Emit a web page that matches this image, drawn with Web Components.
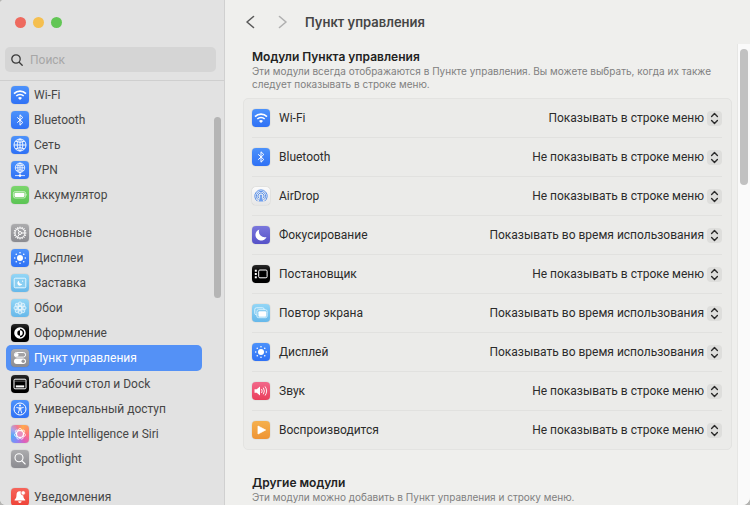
<!DOCTYPE html>
<html lang="ru">
<head>
<meta charset="utf-8">
<meta name="viewport" content="width=device-width, initial-scale=1">
<title>Пункт управления</title>
<style>
    html, body {
        height: 100%;
        margin: 0;
        background: #b4b4b2;
    }
    body {
        --text-font: Roboto, "Liberation Sans", sans-serif;
        --heading-font: Inter, "Liberation Sans", sans-serif;
        font-family: var(--text-font);
        font-size: 12px;
        line-height: 16px;
        color: #2b2b2b;
    }
</style>
</head>
<body>

<settings-window>
    <settings-sidebar slot="sidebar">
        <nav-group>
            <nav-item icon="wifi">Wi-Fi</nav-item>
            <nav-item icon="bluetooth">Bluetooth</nav-item>
            <nav-item icon="network">Сеть</nav-item>
            <nav-item icon="vpn">VPN</nav-item>
            <nav-item icon="battery">Аккумулятор</nav-item>
        </nav-group>
        <nav-group>
            <nav-item icon="general">Основные</nav-item>
            <nav-item icon="display">Дисплеи</nav-item>
            <nav-item icon="saver">Заставка</nav-item>
            <nav-item icon="wallpaper">Обои</nav-item>
            <nav-item icon="appearance">Оформление</nav-item>
            <nav-item icon="control" selected>Пункт управления</nav-item>
            <nav-item icon="dock">Рабочий стол и Dock</nav-item>
            <nav-item icon="access">Универсальный доступ</nav-item>
            <nav-item icon="siri">Apple Intelligence и Siri</nav-item>
            <nav-item icon="spotlight">Spotlight</nav-item>
        </nav-group>
        <nav-group>
            <nav-item icon="bell">Уведомления</nav-item>
        </nav-group>
    </settings-sidebar>

    <settings-pane slot="pane" heading="Пункт управления">
        <module-section heading="Модули Пункта управления">
            <span slot="note">Эти модули всегда отображаются в Пункте управления. Вы можете выбрать, когда их также следует показывать в строке меню.</span>
            <module-row icon="wifi" label="Wi-Fi" value="show"></module-row>
            <module-row icon="bluetooth" label="Bluetooth" value="hide"></module-row>
            <module-row icon="airdrop" label="AirDrop" value="hide"></module-row>
            <module-row icon="focus" label="Фокусирование" value="active"></module-row>
            <module-row icon="stage" label="Постановщик" value="hide"></module-row>
            <module-row icon="mirror" label="Повтор экрана" value="active"></module-row>
            <module-row icon="display" label="Дисплей" value="active"></module-row>
            <module-row icon="sound" label="Звук" value="hide"></module-row>
            <module-row icon="play" label="Воспроизводится" value="hide"></module-row>
        </module-section>
        <module-section heading="Другие модули">
            <span slot="note">Эти модули можно добавить в Пункт управления и строку меню.</span>
        </module-section>
    </settings-pane>
</settings-window>

<script>
// tile: background of the rounded square, art: what is drawn on it (18 x 18 box)
const sunRays = [0, 45, 90, 135, 180, 225, 270, 315]
    .map(a => `<circle cx="9" cy="3.7" r=".8" transform="rotate(${a} 9 9)"/>`).join('');
const petals = [0, 45, 90, 135, 180, 225, 270, 315]
    .map(a => `<ellipse cx="9" cy="5.6" rx="1.9" ry="2.7" transform="rotate(${a} 9 9)"/>`).join('');
const gearTeeth = Array.from({length: 16}, (_, i) =>
    `<path d="M9 2.6V4" transform="rotate(${i * 22.5} 9 9)"/>`).join('');

const blue = 'linear-gradient(#4c92fb, #2f71f5)';
const grey = 'linear-gradient(#acacae, #8b8b90)';
const sky = 'linear-gradient(#93d6f6, #66b8ea)';
const black = 'linear-gradient(#2a2a2a, #000 40%)';

const icons = {
    wifi: { tile: blue, art: `
        <g fill="none" stroke="#fff" stroke-width="1.6">
            <path d="M3 7.6a8.6 8.6 0 0 1 12 0"/>
            <path d="M5.3 10a5.3 5.3 0 0 1 7.4 0"/>
        </g>
        <path d="M9 14l-2-2.1a2.9 2.9 0 0 1 4 0z" fill="#fff"/>` },
    bluetooth: { tile: blue, art: `
        <path d="M6.2 6.3l5.6 5.2L9 14.2V3.8l2.8 2.7-5.6 5.2" fill="none" stroke="#fff" stroke-width="1"/>` },
    network: { tile: blue, art: `
        <g fill="none" stroke="#fff" stroke-width=".9">
            <circle cx="9" cy="9" r="6"/><ellipse cx="9" cy="9" rx="2.8" ry="6"/>
            <path d="M3 9h12M9 3v12M4.5 5.2q4.5 2.4 9 0M4.5 12.8q4.5-2.4 9 0"/>
        </g>` },
    vpn: { tile: blue, art: `
        <g fill="none" stroke="#fff" stroke-width=".8">
            <circle cx="9" cy="6.8" r="4.7"/><ellipse cx="9" cy="6.8" rx="2.2" ry="4.7"/>
            <path d="M4.3 6.8h9.4M9 2v11M5.4 4q3.6 1.8 7.2 0M5.4 9.6q3.6-1.8 7.2 0"/>
            <path d="M4 14.6h10"/>
        </g>
        <circle cx="9" cy="14.6" r="1.3" fill="#fff"/>` },
    battery: { tile: 'linear-gradient(#7bd66c, #5bc454)', art: `
        <rect x="2.4" y="5.6" width="12.2" height="6.4" rx="1.8" fill="none" stroke="#d9f5d4" stroke-width=".8"/>
        <rect x="3.5" y="6.7" width="10" height="4.2" rx="1" fill="#fff"/>
        <path d="M15.5 7.5q1.2 1.3 0 2.6z" fill="#e8fae5"/>` },
    general: { tile: grey, art: `
        <g fill="none" stroke="#fff" stroke-width="1">
            <circle cx="9" cy="9" r="5"/>${gearTeeth}
            <circle cx="9" cy="9" r="1.5"/>
            <path d="M10.5 9H14M8.2 7.7L6.4 4.7M8.2 10.3l-1.8 3"/>
        </g>` },
    display: { tile: blue, art: `<g fill="#fff"><circle cx="9" cy="9" r="3"/>${sunRays}</g>` },
    saver: { tile: sky, art: `
        <rect x="3.2" y="4.2" width="11.6" height="9.6" rx="1" fill="#8bcff2" stroke="#e6f7ff" stroke-width="1"/>
        <path d="M8 6.8a2.5 2.5 0 1 0 3.2 3.2A2.7 2.7 0 0 1 8 6.8z" fill="#fff"/>
        <circle cx="11.6" cy="7.2" r=".6" fill="#fff"/>` },
    wallpaper: { tile: sky, art: `
        <g fill="#fff" fill-opacity=".2" stroke="#f2fbff" stroke-width=".7">${petals}</g>
        <circle cx="9" cy="9" r="1.6" fill="#7cc9f1" stroke="#fff" stroke-width=".6"/>` },
    appearance: { tile: black, art: `
        <circle cx="9" cy="9" r="5" fill="none" stroke="#fff" stroke-width="1.6"/>
        <path d="M9 4v10A5 5 0 0 1 9 4z" fill="#fff"/>
        <path d="M9 6.3a2.7 2.7 0 0 0 0 5.4z" fill="#000"/>
        <path d="M9 6.3a2.7 2.7 0 0 1 0 5.4z" fill="#fff"/>` },
    control: { tile: grey, art: `
        <rect x="3.4" y="3.5" width="11.2" height="4.6" rx="2.3" fill="none" stroke="#fff" stroke-width="1"/>
        <circle cx="5.7" cy="5.8" r="1.9" fill="#fff"/>
        <rect x="3" y="9.5" width="12" height="5.4" rx="2.7" fill="#fff"/>
        <circle cx="12.2" cy="12.2" r="1.7" fill="#98989b"/>` },
    dock: { tile: black, art: `
        <rect x="3" y="4.2" width="12" height="9.6" rx="1" fill="none" stroke="#fff" stroke-width="1"/>
        <path d="M3 6.2h12" stroke="#999" stroke-width=".6"/>
        <rect x="4.8" y="10.4" width="8.4" height="2" fill="#fff"/>` },
    access: { tile: blue, art: `
        <circle cx="9" cy="9" r="6" fill="none" stroke="#fff" stroke-width="1"/>
        <circle cx="9" cy="5.6" r="1" fill="#fff"/>
        <path d="M5.7 7.5l2.3.5h2l2.3-.5M9 8v2M8.2 8v2.2L7.3 13M9.8 8v2.2l.9 2.8" fill="none" stroke="#fff" stroke-width=".9" stroke-linecap="round"/>` },
    siri: { tile: 'conic-gradient(from 20deg, #ffa94d, #fd6f83 80deg, #db5fbe 130deg, #8f83f4 180deg, #54a7f8 235deg, #a5a5ee 280deg, #f5788f 320deg, #ffa94d)', art: `
        <g fill="none" stroke="#fff" stroke-width=".8">
            <circle cx="9" cy="9" r="3.5" stroke-width="1.1"/>
            <circle cx="9" cy="5" r="1.5"/><circle cx="12.1" cy="6.5" r="1.5"/>
            <circle cx="12.9" cy="9.9" r="1.5"/><circle cx="10.7" cy="12.6" r="1.5"/>
            <circle cx="7.3" cy="12.6" r="1.5"/><circle cx="5.1" cy="9.9" r="1.5"/>
            <circle cx="5.9" cy="6.5" r="1.5"/>
        </g>
        <circle cx="9" cy="9" r="2.8" fill="#e98fc0"/>` },
    spotlight: { tile: grey, art: `
        <g fill="none" stroke="#fff" stroke-width="1.1" stroke-linecap="round">
            <circle cx="8" cy="7.8" r="4"/><path d="M11 10.8l3.2 3.2"/>
        </g>` },
    bell: { tile: 'linear-gradient(#f6655b, #ee4237)', art: `
        <path d="M8.7 3.3c-2.3 0-3.2 1.7-3.2 3.7 0 2.5-.5 3.3-1.9 4.8v.7h10.6v-.7c-1.5-1.5-1.9-2.3-1.9-4.8 0-2-1.3-3.7-3.6-3.7z" fill="#fff"/>
        <path d="M7.2 13.3h3.4a1.7 1.7 0 0 1-3.4 0z" fill="#fff"/>
        <circle cx="12.2" cy="4.9" r="2.2" fill="#fff" stroke="#f35c52" stroke-width=".8"/>` },
    airdrop: { tile: 'linear-gradient(#fbfbfb, #e6e6e6)', art: `
        <g fill="none" stroke="#4a86e8" stroke-width=".9">
            <path d="M5.5 14.2a6.2 6.2 0 1 1 7 0"/>
            <path d="M6.3 12.7a4.6 4.6 0 1 1 5.4 0"/>
            <path d="M7 11.2a3 3 0 1 1 4 0"/>
        </g>
        <path d="M6.6 14.4L8.3 10a1.3 1.3 0 1 1 1.4 0l1.7 4.4z" fill="#6d9eee"/>` },
    focus: { tile: 'linear-gradient(#7a77dc, #5551c8)', art: `
        <path d="M7.3 3.5a5.7 5.7 0 1 0 7.2 7.4A5.7 5.7 0 0 1 7.3 3.5z" fill="#fff"/>` },
    stage: { tile: black, art: `
        <rect x="6.7" y="5" width="8.4" height="7.8" rx="1.2" fill="none" stroke="#fff" stroke-width="1"/>
        <g fill="#fff"><rect x="2.8" y="4.7" width="2" height="2"/><rect x="2.8" y="8" width="2" height="2"/><rect x="2.8" y="11.3" width="2" height="2"/></g>` },
    mirror: { tile: sky, art: `
        <rect x="2.8" y="3.8" width="9.4" height="7" rx="1.6" fill="none" stroke="#e9f8ff" stroke-width=".9"/>
        <rect x="4.9" y="5.7" width="10.2" height="8" rx="1.6" fill="#79c6ef" stroke="#e9f8ff" stroke-width=".8"/>
        <rect x="6.4" y="7.2" width="7.8" height="5.6" rx="1" fill="#fff"/>` },
    sound: { tile: 'linear-gradient(#f2688a, #ea3f5b)', art: `
        <path d="M2.5 7.2h2.2L8 4.6v8.8l-3.3-2.6H2.5z" fill="#fff"/>
        <g fill="none" stroke="#fff" stroke-width=".9" stroke-linecap="round">
            <path d="M9.7 7.3q1.2 1.7 0 3.4M11.5 6q2 3 0 6M13.3 4.8q2.9 4.2 0 8.4"/>
        </g>` },
    play: { tile: 'linear-gradient(#f5b04e, #ee9434)', art: `
        <path d="M6 5v8l7.6-4z" fill="#fff" stroke="#fff" stroke-width=".8" stroke-linejoin="round"/>` }
};

function makeTemplate(html){
    const template = document.createElement('template');
    template.innerHTML = html;
    return template;
}

const iconTemplate = makeTemplate(`
    <style>
        :host {
            display: block;
            flex: none;
            width: 18px;
            height: 18px;
            border-radius: 4px;
            box-shadow: 0 0 1px rgba(0, 0, 0, 0.35);
        }
        svg {
            display: block;
        }
    </style>
    <svg width="18" height="18" viewBox="0 0 18 18" aria-hidden="true"></svg>
`);

class TileIcon extends HTMLElement{
    static get observedAttributes(){ return ['name']; }

    constructor(){
        super();
        this.shadow = this.attachShadow({mode: 'open'});
        this.shadow.appendChild( iconTemplate.content.cloneNode(true) );
    }

    attributeChangedCallback(attribute, oldValue, newValue){
        const icon = icons[newValue];
        if (icon != null){
            this.style.background = icon.tile;
            this.shadow.querySelector('svg').innerHTML = icon.art;
        }
    }
}
customElements.define('tile-icon', TileIcon);

const windowTemplate = makeTemplate(`
    <style>
        :host {
            display: grid;
            grid-template-columns: 225px minmax(0, 1fr);
            height: 100vh;
            overflow: hidden;
            background: #efefed;
            border-radius: 4px 0 8px 6px;
        }
        ::slotted(*) {
            min-height: 0;
        }
    </style>
    <slot name="sidebar"></slot>
    <slot name="pane"></slot>
`);

class SettingsWindow extends HTMLElement{
    constructor(){
        super();
        this.attachShadow({mode: 'open'}).appendChild( windowTemplate.content.cloneNode(true) );
    }
}
customElements.define('settings-window', SettingsWindow);

const sidebarTemplate = makeTemplate(`
    <style>
        :host {
            display: flex;
            flex-direction: column;
            box-sizing: border-box;
            background: #e2e2e2;
            border-right: 1px solid #d0d0d0;
            color: #464646;
        }
        header {
            flex: none;
            padding: 17px 8px 8px 5px;
            border-bottom: 1px solid #cfcfcf;
        }
        .lights {
            display: flex;
            gap: 7px;
            padding: 0 10px;
            margin-bottom: 19px;
        }
        .lights button {
            width: 11px;
            height: 11px;
            padding: 0;
            border: 0;
            border-radius: 50%;
        }
        .close { background: #ee6a5f; }
        .minimize { background: #f5bf4f; }
        .zoom { background: #62c655; }
        .search {
            display: flex;
            align-items: center;
            gap: 7px;
            height: 25px;
            padding: 0 6px;
            border-radius: 5px;
            background: #d5d5d5;
        }
        input {
            flex: 1;
            min-width: 0;
            padding: 0;
            border: 0;
            outline: 0;
            background: none;
            font: inherit;
            color: inherit;
        }
        input::placeholder {
            color: #a7a7a7;
        }
        .body {
            display: flex;
            flex: 1;
            min-height: 0;
        }
        nav {
            display: flex;
            flex-direction: column;
            flex: 1;
            gap: 13px;
            padding: 1px 0 0 6px;
            overflow: hidden;
        }
        .scrollbar {
            flex: none;
            width: 22px;
            padding: 36px 3px 0 12px;
            box-sizing: border-box;
        }
        .thumb {
            height: 181px;
            border-radius: 4px;
            background: #b5b5b5;
        }
    </style>

    <header>
        <div class="lights">
            <button class="close" aria-label="Закрыть"></button>
            <button class="minimize" aria-label="Свернуть"></button>
            <button class="zoom" aria-label="Развернуть"></button>
        </div>
        <label class="search">
            <svg width="12" height="12" viewBox="0 0 12 12" fill="none" stroke="#3a3a3a" stroke-width="1.3" stroke-linecap="round" aria-hidden="true">
                <circle cx="5" cy="5" r="4.2"/><path d="M8.2 8.2l3 3"/>
            </svg>
            <input type="search" placeholder="Поиск" aria-label="Поиск">
        </label>
    </header>
    <div class="body">
        <nav><slot></slot></nav>
        <div class="scrollbar"><div class="thumb"></div></div>
    </div>
`);

class SettingsSidebar extends HTMLElement{
    constructor(){
        super();
        this.attachShadow({mode: 'open'}).appendChild( sidebarTemplate.content.cloneNode(true) );
    }
}
customElements.define('settings-sidebar', SettingsSidebar);

const groupTemplate = makeTemplate(`
    <style>
        :host {
            display: flex;
            flex-direction: column;
            flex: none;
        }
    </style>
    <slot></slot>
`);

class NavGroup extends HTMLElement{
    constructor(){
        super();
        this.attachShadow({mode: 'open'}).appendChild( groupTemplate.content.cloneNode(true) );
    }
}
customElements.define('nav-group', NavGroup);

const navItemTemplate = makeTemplate(`
    <style>
        :host {
            display: block;
        }
        a {
            display: flex;
            align-items: center;
            gap: 5px;
            height: 25px;
            padding-left: 5px;
            border-radius: 5px;
            color: inherit;
            text-decoration: none;
            white-space: nowrap;
        }
        :host([selected]) a {
            height: 26px;
            background: #5491f6;
            color: #fff;
        }
    </style>
    <a href="#"><tile-icon></tile-icon><slot></slot></a>
`);

class NavItem extends HTMLElement{
    constructor(){
        super();
        this.shadow = this.attachShadow({mode: 'open'});
        this.shadow.appendChild( navItemTemplate.content.cloneNode(true) );
    }

    connectedCallback(){
        const name = this.getAttribute('icon');
        const link = this.shadow.querySelector('a');
        link.href = `#${name}`;
        this.shadow.querySelector('tile-icon').setAttribute('name', name);
        if (this.hasAttribute('selected')){
            link.setAttribute('aria-current', 'page');
        }
    }
}
customElements.define('nav-item', NavItem);

const paneTemplate = makeTemplate(`
    <style>
        :host {
            display: flex;
            flex-direction: column;
            background: #efefed;
        }
        header {
            display: flex;
            align-items: center;
            flex: none;
            gap: 18px;
            height: 44px;
            padding-left: 20px;
        }
        .history {
            display: flex;
            gap: 22px;
        }
        button {
            padding: 0;
            border: 0;
            background: none;
            color: #5a5a5a;
        }
        button:disabled {
            color: #b0b0b0;
        }
        header svg {
            display: block;
        }
        h1 {
            margin: 0;
            font-family: var(--heading-font);
            font-size: 13px;
            line-height: 16px;
            font-weight: 600;
            color: #454545;
        }
        .body {
            display: flex;
            flex: 1;
            min-height: 0;
        }
        main {
            display: flex;
            flex-direction: column;
            flex: 1;
            min-width: 0;
            gap: 25px;
            padding: 5px 5px 0 18px;
            overflow: hidden;
        }
        .scrollbar {
            flex: none;
            box-sizing: border-box;
            width: 13px;
            padding: 5px 2px 0 2px;
            border-left: 1px solid #e6e6e4;
            background: #fafafa;
        }
        .thumb {
            height: 136px;
            border-radius: 4px;
            background: #c1c1c1;
        }
    </style>

    <header>
        <div class="history">
            <button aria-label="Назад">
                <svg width="10" height="14" viewBox="0 0 10 14" fill="none" stroke="currentColor" stroke-width="1.6" stroke-linecap="round" stroke-linejoin="round"><path d="M8.5 1.5L2 7l6.5 5.5"/></svg>
            </button>
            <button aria-label="Вперед" disabled>
                <svg width="10" height="14" viewBox="0 0 10 14" fill="none" stroke="currentColor" stroke-width="1.6" stroke-linecap="round" stroke-linejoin="round"><path d="M2.5 1.5L9 7l-6.5 5.5"/></svg>
            </button>
        </div>
        <h1></h1>
    </header>
    <div class="body">
        <main><slot></slot></main>
        <div class="scrollbar"><div class="thumb"></div></div>
    </div>
`);

class SettingsPane extends HTMLElement{
    constructor(){
        super();
        this.shadow = this.attachShadow({mode: 'open'});
        this.shadow.appendChild( paneTemplate.content.cloneNode(true) );
    }

    connectedCallback(){
        this.shadow.querySelector('h1').textContent = this.getAttribute('heading');
    }
}
customElements.define('settings-pane', SettingsPane);

const sectionTemplate = makeTemplate(`
    <style>
        :host {
            display: block;
            flex: none;
            font-family: var(--heading-font);
        }
        h2 {
            margin: 0 9px;
            font-size: 12px;
            line-height: 16px;
            font-weight: 600;
            color: #222;
        }
        p {
            margin: 0 9px;
            font-size: 10px;
            line-height: 13px;
            color: #808080;
        }
        .card {
            margin-top: 7px;
            padding: 0 9px 0 8px;
            border: 1px solid #e3e3e1;
            border-radius: 5px;
            background: #ebebe9;
            font-family: var(--text-font);
        }
    </style>
    <h2></h2>
    <p><slot name="note"></slot></p>
    <div class="card"><slot></slot></div>
`);

class ModuleSection extends HTMLElement{
    constructor(){
        super();
        this.shadow = this.attachShadow({mode: 'open'});
        this.shadow.appendChild( sectionTemplate.content.cloneNode(true) );
    }

    connectedCallback(){
        this.shadow.querySelector('h2').textContent = this.getAttribute('heading');
        if (this.querySelector('module-row') == null){
            this.shadow.querySelector('.card').remove();
        }
    }
}
customElements.define('module-section', ModuleSection);

const rowTemplate = makeTemplate(`
    <style>
        :host {
            display: flex;
            align-items: center;
            height: 38px;
            border-bottom: 1px solid #e1e1df;
        }
        :host(:last-of-type) {
            border-bottom: 0;
        }
        label {
            flex: 1;
            margin-left: 9px;
        }
        .picker {
            display: grid;
            align-items: center;
        }
        select, .arrows {
            grid-area: 1 / 1;
        }
        select {
            appearance: none;
            padding: 0 18px 0 0;
            border: 0;
            outline: 0;
            background: none;
            font: inherit;
            color: inherit;
            text-align-last: right;
        }
        .arrows {
            justify-self: end;
            width: 15px;
            height: 15px;
            border-radius: 4px;
            background: #dededc;
            pointer-events: none;
        }
    </style>
    <tile-icon></tile-icon>
    <label for="mode"></label>
    <div class="picker">
        <svg class="arrows" viewBox="0 0 15 15" fill="none" stroke="#2b2b2b" stroke-width="1.4" stroke-linecap="round" stroke-linejoin="round" aria-hidden="true">
            <path d="M4.6 5.4L7.5 2.6l2.9 2.8M4.6 9.6l2.9 2.8 2.9-2.8"/>
        </svg>
        <select id="mode">
            <option value="show">Показывать в строке меню</option>
            <option value="active">Показывать во время использования</option>
            <option value="hide">Не показывать в строке меню</option>
        </select>
    </div>
`);

class ModuleRow extends HTMLElement{
    constructor(){
        super();
        this.shadow = this.attachShadow({mode: 'open'});
        this.shadow.appendChild( rowTemplate.content.cloneNode(true) );
    }

    connectedCallback(){
        this.shadow.querySelector('tile-icon').setAttribute('name', this.getAttribute('icon'));
        this.shadow.querySelector('label').textContent = this.getAttribute('label');
        this.shadow.querySelector('select').value = this.getAttribute('value');
    }
}
customElements.define('module-row', ModuleRow);
</script>
</body>
</html>
